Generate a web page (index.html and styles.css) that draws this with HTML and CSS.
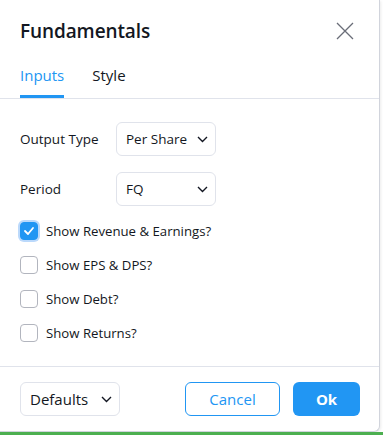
FILE: index.html
```html
<!DOCTYPE html>
<html lang="en">
<head>
<meta charset="UTF-8">
<meta name="viewport" content="width=device-width, initial-scale=1.0">
<title>Fundamentals</title>
<link rel="stylesheet" href="styles.css">
</head>
<body>
<div class="stage">
    <div class="dialog">
        <div class="dialog-header">
            <h1>Fundamentals</h1>
            <button class="close-btn" aria-label="Close">
                <svg width="18" height="18" viewBox="0 0 18 18"><path d="M1 1l16 16M17 1L1 17" stroke="#6a6d78" stroke-width="1.3" fill="none"/></svg>
            </button>
        </div>
        <div class="tabs">
            <div class="tab active">Inputs</div>
            <div class="tab">Style</div>
        </div>
        <div class="content">
            <div class="field">
                <span class="field-label">Output Type</span>
                <div class="select">
                    <span>Per Share</span>
                    <svg class="chevron" width="11" height="7" viewBox="0 0 11 7"><path d="M1 1l4.5 4.5L10 1" stroke="#131722" stroke-width="1.4" fill="none"/></svg>
                </div>
            </div>
            <div class="field">
                <span class="field-label">Period</span>
                <div class="select">
                    <span>FQ</span>
                    <svg class="chevron" width="11" height="7" viewBox="0 0 11 7"><path d="M1 1l4.5 4.5L10 1" stroke="#131722" stroke-width="1.4" fill="none"/></svg>
                </div>
            </div>
            <label class="check-row">
                <span class="checkbox checked">
                    <svg width="12" height="10" viewBox="0 0 12 10"><path d="M2 5l3 3 5-6" stroke="#fff" stroke-width="1.8" fill="none" stroke-linecap="round" stroke-linejoin="round"/></svg>
                </span>
                Show Revenue &amp; Earnings?
            </label>
            <label class="check-row">
                <span class="checkbox"></span>
                Show EPS &amp; DPS?
            </label>
            <label class="check-row">
                <span class="checkbox"></span>
                Show Debt?
            </label>
            <label class="check-row">
                <span class="checkbox"></span>
                Show Returns?
            </label>
        </div>
        <div class="dialog-footer">
            <div class="select defaults">
                <span>Defaults</span>
                <svg class="chevron" width="11" height="7" viewBox="0 0 11 7"><path d="M1 1l4.5 4.5L10 1" stroke="#131722" stroke-width="1.4" fill="none"/></svg>
            </div>
            <div class="footer-actions">
                <button class="btn btn-outline">Cancel</button>
                <button class="btn btn-primary">Ok</button>
            </div>
        </div>
    </div>
    <div class="chart-strip"></div>
</div>
</body>
</html>
```

FILE: styles.css
```css
html, body {
    margin: 0;
    padding: 0;
    width: 100%;
    height: 100%;
    font-family: "Open Sans", "Noto Sans", sans-serif;
    color: #131722;
    background-color: #fff;
    overflow: hidden;
}
.stage {
    width: 383px;
    height: 435px;
    display: flex;
    flex-direction: column;
    background-color: #fff;
}
.dialog {
    width: 379px;
    height: 431px;
    background-color: #fff;
    border-right: 1px solid #d1d4dc;
    border-bottom: 1px solid #d1d4dc;
    border-radius: 0 0 6px 0;
    box-shadow: 1px 1px 3px rgba(0, 0, 0, 0.08);
    display: flex;
    flex-direction: column;
    flex-shrink: 0;
}
.dialog-header {
    height: 62px;
    padding: 0 20px;
    display: flex;
    align-items: center;
    justify-content: space-between;
}
.dialog-header h1 {
    margin: 0;
    font-size: 19px;
    font-weight: 600;
    letter-spacing: -0.1px;
}
.close-btn {
    background: none;
    border: none;
    padding: 0;
    margin-right: 5px;
    display: flex;
    cursor: pointer;
}
.tabs {
    height: 36px;
    padding: 0 20px;
    display: flex;
    gap: 28px;
    border-bottom: 1px solid #e0e3eb;
}
.tab {
    font-size: 15px;
    line-height: 20px;
    padding-top: 3px;
    box-sizing: border-box;
    border-bottom: 3px solid transparent;
}
.tab.active {
    color: #2196f3;
    border-bottom-color: #2196f3;
}
.content {
    padding: 23px 20px 16px;
    display: flex;
    flex-direction: column;
    border-bottom: 1px solid #e0e3eb;
}
.field {
    display: flex;
    align-items: center;
    margin-bottom: 16px;
}
.field:nth-child(2) {
    margin-bottom: 8px;
}
.field-label {
    width: 96px;
    font-size: 13.5px;
}
.select {
    width: 100px;
    height: 34px;
    box-sizing: border-box;
    border: 1px solid #e0e3eb;
    border-radius: 6px;
    padding: 0 7px 0 9px;
    display: flex;
    align-items: center;
    justify-content: space-between;
    font-size: 13.5px;
}
.check-row {
    height: 34px;
    display: flex;
    align-items: center;
    gap: 8px;
    font-size: 13.2px;
}
.checkbox {
    width: 18px;
    height: 18px;
    box-sizing: border-box;
    border: 1px solid #b2b5be;
    border-radius: 4px;
    display: flex;
    align-items: center;
    justify-content: center;
}
.checkbox.checked {
    background-color: #2196f3;
    border-color: #2196f3;
    box-shadow: 0 0 0 2px #bbd9fb;
}
.dialog-footer {
    flex: 1;
    padding: 0 19px 0 20px;
    display: flex;
    align-items: center;
    justify-content: space-between;
}
.defaults {
    font-size: 15px;
}
.footer-actions {
    display: flex;
    gap: 13px;
}
.btn {
    height: 34px;
    border-radius: 6px;
    font-family: inherit;
    font-size: 15px;
    cursor: pointer;
}
.btn-outline {
    width: 95px;
    background-color: #fff;
    border: 1px solid #2196f3;
    color: #2196f3;
}
.btn-primary {
    width: 67px;
    background-color: #2196f3;
    border: none;
    color: #fff;
    font-weight: 700;
}
.chart-strip {
    margin-top: auto;
    height: 3px;
    background-color: #4caf50;
}
```
